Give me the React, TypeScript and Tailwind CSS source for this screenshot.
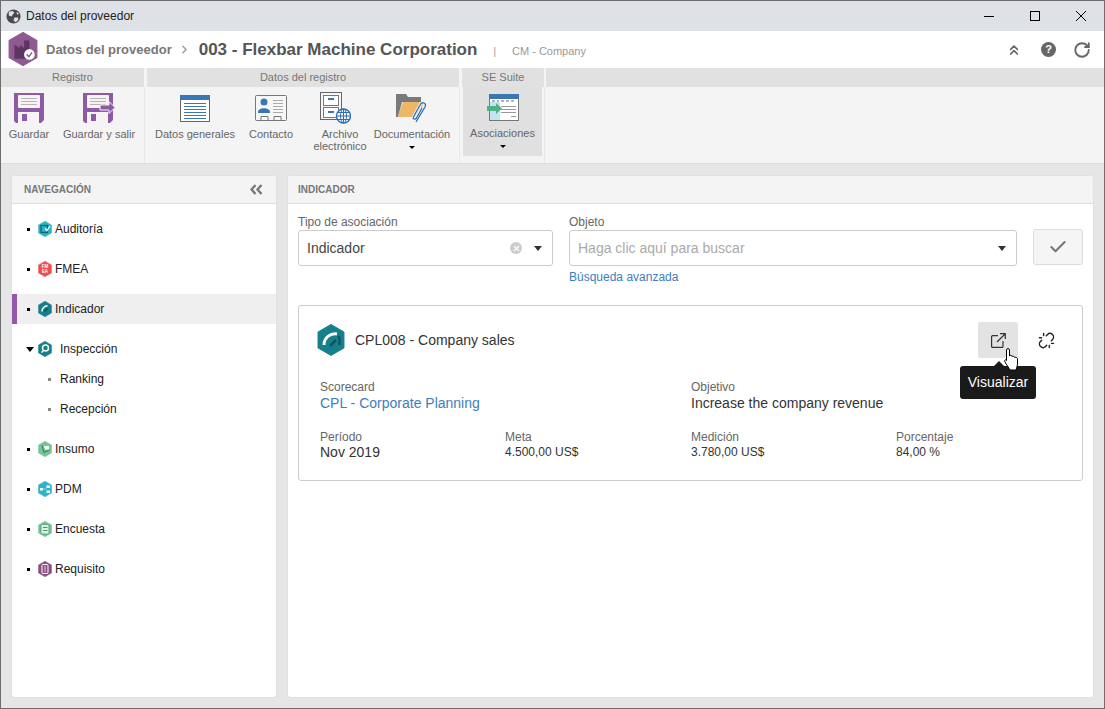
import React from "react";
import { Check, ChevronRight, ChevronsUp, Unlink, X, RotateCw } from "lucide-react";

const font = "font-['Liberation_Sans',Arial,sans-serif]";

function Hex({ size, color, children }: { size: number; color: string; children?: React.ReactNode }) {
  return (
    <svg width={size} height={size * 1.14} viewBox="0 0 28 32" className="shrink-0">
      <path d="M14 0.5 L27 8 V24 L14 31.5 L1 24 V8 Z" fill={color} stroke={color} strokeLinejoin="round" />
      {children}
    </svg>
  );
}

function Floppy({ arrow }: { arrow?: boolean }) {
  return (
    <svg width={arrow ? 32 : 30} height="30" viewBox={arrow ? "0 0 32 30" : "0 0 30 30"}>
      <path d="M0 0 H30 V27 L27 30 H2 L0 28 Z" fill="#8e5aa6" />
      <rect x="4" y="2" width="22" height="13" rx="1" fill="#f4f4f4" />
      <path d="M7 5.500 H23 M7 8.500 H23 M7 11.500 H23" stroke="#b5b5b5" strokeWidth="1" />
      <rect x="4" y="19" width="21" height="11" fill="#f4f4f4" />
      <rect x="8" y="21" width="5" height="7" fill="#8e5aa6" />
      {arrow && <path d="M17 12 H26 V8.500 L32 14.500 L26 20.500 V17 H17 Z" fill="#8e5aa6" stroke="#f4f4f4" strokeWidth="1" />}
    </svg>
  );
}

function DocIcon() {
  return (
    <svg width="30" height="27" viewBox="0 0 30 27">
      <rect x="0.500" y="0.500" width="29" height="26" fill="#fff" stroke="#666" />
      <rect x="0" y="0" width="30" height="5" fill="#3a75b5" />
      <path d="M4 8.500 H26 M4 11.500 H26 M4 14.500 H26 M4 17.500 H26 M4 20.500 H26 M4 23.500 H26" stroke="#3a75b5" strokeWidth="1" />
    </svg>
  );
}

function ContactIcon() {
  return (
    <svg width="32" height="26" viewBox="0 0 32 26">
      <rect x="0.500" y="0.500" width="31" height="25" rx="1" fill="#f7f7f7" stroke="#777" />
      <circle cx="9" cy="7" r="3.500" fill="#3a75b5" />
      <path d="M3 17 C3 12 15 12 15 17 V18 H3 Z" fill="#3a75b5" />
      <path d="M18 5.500 H28 M18 8.500 H28 M18 11.500 H28 M18 14.500 H28 M18 17.500 H28" stroke="#aaa" />
      <path d="M6 25 V21.500 H13 V25 M19 25 V21.500 H26 V25" fill="#f7f7f7" stroke="#777" />
    </svg>
  );
}

function ArchiveIcon() {
  return (
    <svg width="31" height="32" viewBox="0 0 31 32">
      <rect x="0.500" y="0.500" width="21" height="27" fill="#f7f7f7" stroke="#666" />
      <rect x="3.500" y="3.500" width="15" height="10" fill="#fff" stroke="#777" />
      <rect x="3.500" y="15.500" width="15" height="10" fill="#fff" stroke="#777" />
      <path d="M8 7 H14 M8 20 H14" stroke="#3a75b5" strokeWidth="2" />
      <circle cx="23.500" cy="24" r="7" fill="#fff" stroke="#2d6fb3" strokeWidth="1.400" />
      <path d="M16.500 24 H30.500 M23.500 17 V31 M18 20.500 H29 M18 27.500 H29" stroke="#2d6fb3" />
      <ellipse cx="23.500" cy="24" rx="3" ry="7" fill="none" stroke="#2d6fb3" />
    </svg>
  );
}

function FolderIcon() {
  return (
    <svg width="32" height="30" viewBox="0 0 32 30">
      <path d="M0 1 H10 L12 4 H25 V9 H6 L2 24 H0 Z" fill="#7a7a7a" />
      <path d="M7 9 H28 L23 24 H1.500 Z" fill="#ecb866" />
      <path d="M20 29 L29 14 C31 10 26 8 24 12 L17.500 24 C16.500 26 19 27 20.500 25 L26 15" fill="none" stroke="#f4f4f4" strokeWidth="3" />
      <path d="M20 29 L29 14 C31 10 26 8 24 12 L17.500 24 C16.500 26 19 27 20.500 25 L26 15" fill="none" stroke="#2d6fb3" strokeWidth="1.300" />
    </svg>
  );
}

function AssocIcon() {
  return (
    <svg width="32" height="27" viewBox="0 0 32 27">
      <rect x="2.500" y="0.500" width="29" height="26" fill="#fff" stroke="#777" />
      <rect x="2" y="0" width="30" height="5" fill="#3a75b5" />
      <rect x="3" y="8" width="10" height="18" fill="#c6e3f5" />
      <path d="M5 7 H8 M10 7 H12 M14 7 H17 M19 7 H22 M24 7 H27" stroke="#666" />
      <path d="M14 12.500 H29 M14 15.500 H29 M14 18.500 H29 M24 22.500 H29" stroke="#999" />
      <path d="M0 12 H9 V9 L15 14.500 L9 20 V17 H0 Z" fill="#4fb286" />
    </svg>
  );
}

function ToolBtn({ icon, label, arrow, active, width }: { icon: React.ReactNode; label: React.ReactNode; arrow?: boolean; active?: boolean; width: string }) {
  return (
    <div className={`flex flex-col items-center ${width} h-[69px] ${active ? "bg-[#e0e0e0]" : ""}`}>
      <div className="h-[30px] mt-[5px] flex items-center justify-center shrink-0">{icon}</div>
      <div className="mt-[5px] text-[11px] leading-[12px] text-[#666] text-center whitespace-nowrap">{label}</div>
      {arrow && <div className="mt-[6px] w-0 h-0 border-x-[3px] border-x-transparent border-t-[3px] border-t-black" />}
    </div>
  );
}

function NavRow({ icon, label, active }: { icon: React.ReactNode; label: string; active?: boolean }) {
  return (
    <div className={`h-[30px] flex items-center text-[12px] text-[#222] ${active ? "bg-[#efefef] border-l-[5px] border-l-[#9558a8] pl-[10px]" : "pl-[15px]"}`}>
      <span className="w-[3px] h-[3px] bg-black mr-[8px]" />
      {icon}
      <span className="ml-[3px]">{label}</span>
    </div>
  );
}

function Field({ label, value, valueClass }: { label: string; value: string; valueClass: string }) {
  return (
    <div>
      <div className="text-[12px] leading-[14px] text-[#666]">{label}</div>
      <div className={valueClass}>{value}</div>
    </div>
  );
}

const caret = "w-0 h-0 border-x-[4px] border-x-transparent border-t-[5px] border-t-[#333]";

export default function App() {
  return (
    <div className={`${font} w-[1105px] h-[709px] overflow-hidden flex flex-col bg-[#e6e6e6] border-x border-t border-[#6e6e6e]`}>
      {/* Title bar */}
      <div className="h-[30px] shrink-0 bg-[#dee1e6] flex items-center pl-[5px] text-[12px] text-[#222]">
        <svg width="15" height="15" viewBox="0 0 16 16" className="mr-[5px]">
          <circle cx="8" cy="8" r="7.500" fill="#4a4a4a" />
          <path d="M3 3 L7 2 L9 4 L7 6 L6 8 L3 7 Z M9 9 L13 9 L13 12 L10 14 L8 12 Z M11 3 L14 5 L12 6 Z" fill="#dee1e6" />
        </svg>
        <span>Datos del proveedor</span>
        <div className="ml-auto flex items-center pr-[18px] gap-[36px]">
          <div className="w-[10px] h-px bg-black" />
          <div className="w-[10px] h-[10px] border border-black" />
          <svg width="10" height="10" viewBox="0 0 10 10">
            <path d="M0 0 L10 10 M10 0 L0 10" stroke="#000" strokeWidth="1" />
          </svg>
        </div>
      </div>

      {/* Record header */}
      <div className="h-[37px] shrink-0 bg-white flex items-center pl-[7px]">
        <Hex size={30} color="#8e5a90">
          <path d="M6 25 V12 L11 15 V12 L15 15 V8 H20 V25 Z" fill="#5d3560" />
          <circle cx="20" cy="21" r="5" fill="#fff" />
          <path d="M17.500 21 L19.500 23 L22.500 19" stroke="#8e5a90" strokeWidth="1.300" fill="none" />
        </Hex>
        <span className="ml-[8px] text-[13px] font-bold text-[#777]">Datos del proveedor</span>
        <ChevronRight size={13} strokeWidth={2.500} className="text-[#999] ml-[6px] mr-[8px]" />
        <span className="text-[17px] font-bold text-[#555]">003 - Flexbar Machine Corporation</span>
        <span className="ml-[16px] pt-[3px] text-[10px] text-[#999]">|</span>
        <span className="ml-[16px] pt-[3px] text-[11px] text-[#999]">CM - Company</span>
        <div className="ml-auto flex items-center text-[#666] pr-[13px]">
          <ChevronsUp size={16} strokeWidth={2.500} className="mr-[19px]" />
          <div className="w-[15px] h-[15px] rounded-full bg-[#666] text-white text-[11px] font-bold flex items-center justify-center mr-[17px]">?</div>
          <RotateCw size={18} strokeWidth={2.500} />
        </div>
      </div>

      {/* Toolbar */}
      <div className="h-[96px] shrink-0 flex bg-[#f4f4f4] border-b border-[#dcdcdc]">
        <div className="w-[146px] shrink-0">
          <div className="w-[143px] h-[19px] bg-[#e1e1e1] text-[11px] leading-[19px] text-[#777] text-center">Registro</div>
          <div className="w-[144px] h-[76px] flex pl-[4px] pt-[1px] border-r border-[#e8e8e8]">
            <ToolBtn icon={<Floppy />} label="Guardar" width="w-[48px]" />
            <div className="w-[4px]" />
            <ToolBtn icon={<Floppy arrow />} label="Guardar y salir" width="w-[84px]" />
          </div>
        </div>
        <div className="w-[315px] shrink-0">
          <div className="w-[312px] h-[19px] bg-[#e1e1e1] text-[11px] leading-[19px] text-[#777] text-center">Datos del registro</div>
          <div className="w-[313px] h-[76px] flex pl-[4px] pt-[1px] border-r border-[#e8e8e8]">
            <ToolBtn icon={<DocIcon />} label="Datos generales" width="w-[88px]" />
            <ToolBtn icon={<ContactIcon />} label="Contacto" width="w-[64px]" />
            <ToolBtn icon={<div className="mr-[10px]"><ArchiveIcon /></div>} label={<>Archivo<br />electrónico</>} width="w-[74px]" />
            <ToolBtn icon={<FolderIcon />} label="Documentación" arrow width="w-[70px]" />
          </div>
        </div>
        <div className="w-[84px] shrink-0">
          <div className="w-[82px] h-[19px] bg-[#e1e1e1] text-[11px] leading-[19px] text-[#777] text-center">SE Suite</div>
          <div className="w-[83px] h-[76px] pl-[1px] border-r border-[#e8e8e8]">
            <ToolBtn icon={<AssocIcon />} label="Asociaciones" arrow active width="w-[79px]" />
          </div>
        </div>
        <div className="flex-1">
          <div className="h-[19px] bg-[#e1e1e1]" />
        </div>
      </div>

      {/* Body */}
      <div className="flex-1 flex gap-[12px] pt-[12px] pl-[11px] pr-[11px] pb-[11px] min-h-0 border-b border-[#6e6e6e]">
        {/* Navigation panel */}
        <div className="w-[264px] bg-white rounded-[2px] shadow-[0_0_1px_#bbb] shrink-0">
          <div className="h-[28px] bg-[#f4f4f4] border-b border-[#ddd] flex items-center justify-between pl-[12px] pr-[13px] rounded-t-[2px]">
            <span className="text-[10px] font-bold text-[#777]">NAVEGACIÓN</span>
            <svg width="13" height="11" viewBox="0 0 13 11">
              <path d="M5.500 1 L1.500 5.500 L5.500 10 M11.500 1 L7.500 5.500 L11.500 10" fill="none" stroke="#777" strokeWidth="2.400" />
            </svg>
          </div>
          <div className="pt-[10px] flex flex-col gap-[10px]">
            <NavRow label="Auditoría" icon={<Hex size={14} color="#2bb3c9"><rect x="6" y="9" width="13" height="14" fill="none" stroke="#16606e" strokeWidth="2.500" /><path d="M14 15 L18 19 L24 10" stroke="#fff" strokeWidth="2.500" fill="none" /></Hex>} />
            <NavRow label="FMEA" icon={<Hex size={14} color="#e9524f"><text x="14" y="14" textAnchor="middle" fontSize="9" fontWeight="700" fill="#fff">FM</text><text x="14" y="24" textAnchor="middle" fontSize="9" fontWeight="700" fill="#fff">EA</text></Hex>} />
            <NavRow label="Indicador" active icon={<Hex size={14} color="#15808c"><path d="M8 21 C8 13 15 9 19 10" stroke="#fff" strokeWidth="3" fill="none" /><path d="M13 21 L19 15" stroke="#0b4f57" strokeWidth="2.500" /></Hex>} />
            <div>
              <div className="h-[30px] flex items-center text-[12px] text-[#222] pl-[14px]">
                <span className="w-0 h-0 border-x-[4px] border-x-transparent border-t-[5px] border-t-black mr-[4px]" />
                <Hex size={14} color="#15808c"><circle cx="15" cy="14" r="6" fill="none" stroke="#fff" strokeWidth="3" /><path d="M11 19 L7 23" stroke="#fff" strokeWidth="3" /></Hex>
                <span className="ml-[8px]">Inspección</span>
              </div>
              {["Ranking", "Recepción"].map((s) => (
                <div key={s} className="h-[30px] flex items-center text-[12px] text-[#222] pl-[36px]">
                  <span className="w-[3px] h-[3px] bg-[#888] mr-[9px]" />
                  {s}
                </div>
              ))}
            </div>
            <NavRow label="Insumo" icon={<Hex size={14} color="#75c596"><path d="M8 9 L12 23 L23 18" stroke="#2a7a4c" strokeWidth="2" fill="none" /><path d="M12 10 H22 V17 H14 Z" fill="#fff" /></Hex>} />
            <NavRow label="PDM" icon={<Hex size={14} color="#2bb3c9"><rect x="4" y="14" width="6" height="5" fill="#fff" /><rect x="17" y="9" width="7" height="5" fill="#fff" /><rect x="17" y="19" width="7" height="5" fill="#fff" /><path d="M10 16 H17" stroke="#fff" /></Hex>} />
            <NavRow label="Encuesta" icon={<Hex size={14} color="#75c596"><rect x="6" y="7" width="16" height="19" rx="2" fill="#dff3e7" stroke="#3f9a68" strokeWidth="1.500" /><path d="M10 13 H19 M10 19 H19" stroke="#3f9a68" strokeWidth="2" /></Hex>} />
            <NavRow label="Requisito" icon={<Hex size={14} color="#8b4f80"><rect x="8" y="7" width="12" height="18" rx="2" fill="none" stroke="#fff" strokeWidth="2" /><path d="M12 12 H16 M12 16 H16 M12 20 H16" stroke="#fff" strokeWidth="1.500" /></Hex>} />
          </div>
        </div>

        {/* Main panel */}
        <div className="flex-1 bg-white rounded-[2px] shadow-[0_0_1px_#bbb]">
          <div className="h-[28px] bg-[#f4f4f4] border-b border-[#ddd] flex items-center pl-[10px] rounded-t-[2px]">
            <span className="text-[10px] font-bold text-[#777]">INDICADOR</span>
          </div>
          <div className="pt-[11px] px-[10px]">
            <div className="flex gap-[16px]">
              <div className="w-[255px] shrink-0">
                <div className="text-[12px] leading-[14px] text-[#666] mb-[1px]">Tipo de asociación</div>
                <div className="h-[36px] border border-[#ccc] rounded-[3px] flex items-center pl-[8px] pr-[10px] text-[14px] text-[#444]">
                  <span>Indicador</span>
                  <span className="ml-auto w-[12px] h-[12px] rounded-full bg-[#ccc] flex items-center justify-center mr-[12px]">
                    <X size={9} strokeWidth={3} className="text-white" />
                  </span>
                  <span className={caret} />
                </div>
              </div>
              <div className="w-[448px] shrink-0">
                <div className="text-[12px] leading-[14px] text-[#666] mb-[1px]">Objeto</div>
                <div className="h-[36px] border border-[#ccc] rounded-[3px] flex items-center pl-[8px] pr-[10px] text-[14px] text-[#aaa]">
                  <span>Haga clic aquí para buscar</span>
                  <span className={`ml-auto ${caret}`} />
                </div>
                <div className="mt-[4px] text-[12px] leading-[14px] text-[#3d7ebf]">Búsqueda avanzada</div>
              </div>
              <div className="w-[50px] h-[36px] mt-[14px] shrink-0 bg-[#f5f5f5] border border-[#ddd] rounded-[3px] flex items-center justify-center">
                <Check size={20} strokeWidth={2.500} className="text-[#777]" />
              </div>
            </div>

            {/* Indicator card */}
            <div className="mt-[21px] h-[176px] border border-[#ccc] rounded-[3px] pt-[16px] pl-[18px] pr-[8px] relative">
              <div className="flex items-center h-[36px]">
                <Hex size={28} color="#15808c">
                  <path d="M7 21 C7 13 14 9 20 10" stroke="#fff" strokeWidth="3" fill="none" />
                  <path d="M13 22 L19 16" stroke="#0b4f57" strokeWidth="2.500" />
                  <path d="M21 12 C23 14 23 18 22 21" stroke="#0b4f57" strokeWidth="2" fill="none" />
                </Hex>
                <span className="ml-[10px] text-[14px] text-[#333]">CPL008 - Company sales</span>
                <div className="ml-auto w-[40px] h-[36px] bg-[#e3e3e3] rounded-[2px] flex items-center justify-center">
                  <svg width="15" height="15" viewBox="0 0 15 15" fill="none" stroke="#333" strokeWidth="1.200">
                    <path d="M7 2.600 H1.600 A1 1 0 0 0 0.600 3.600 V13.400 A1 1 0 0 0 1.600 14.400 H11 A1 1 0 0 0 12 13.400 V8" />
                    <path d="M6 9 L14 1 M9 0.700 H14.300 V6" />
                  </svg>
                </div>
                <div className="w-[56px] flex justify-center">
                  <Unlink size={17} strokeWidth={2} className="text-[#222]" />
                </div>
              </div>
              <div className="pl-[3px] mt-[22px] grid grid-cols-[371px_1fr] h-[36px]">
                <Field label="Scorecard" value="CPL - Corporate Planning" valueClass="text-[14px] leading-[18px] text-[#3d7ebf]" />
                <Field label="Objetivo" value="Increase the company revenue" valueClass="text-[14px] leading-[18px] text-[#333]" />
              </div>
              <div className="pl-[3px] mt-[14px] grid grid-cols-[185px_186px_205px_1fr]">
                <Field label="Período" value="Nov 2019" valueClass="text-[14px] leading-[16px] text-[#333]" />
                <Field label="Meta" value="4.500,00 US$" valueClass="text-[12px] leading-[16px] text-[#333]" />
                <Field label="Medición" value="3.780,00 US$" valueClass="text-[12px] leading-[16px] text-[#333]" />
                <Field label="Porcentaje" value="84,00 %" valueClass="text-[12px] leading-[16px] text-[#333]" />
              </div>

              {/* Tooltip and pointer over the card */}
              <div className="absolute left-[661px] top-[60px] w-[76px] h-[33px] bg-[#1a1a1a] rounded-[3px] text-white text-[14px] flex items-center justify-center">
                <span className="absolute -top-[5px] left-[34px] w-0 h-0 border-x-[5px] border-x-transparent border-b-[5px] border-b-[#1a1a1a]" />
                Visualizar
              </div>
              <svg width="15" height="23" viewBox="0 0 15 23" className="absolute left-[705px] top-[42px]">
                <path d="M2.500 2 C2.500 0.200 5.500 0.200 5.500 2 V8 C5.500 7 8 7 8 8.500 C8 8 10.500 8 10.500 9.500 C10.500 9 13.500 9 13.500 11 V16 C13.500 18 12.500 20 12 22 H6 C5 20 2 16 1 14 C0 12 1.500 11 2.500 12.500 Z" fill="#fff" stroke="#000" strokeWidth="1" strokeLinejoin="round" />
              </svg>
            </div>
          </div>
        </div>
      </div>
    </div>
  );
}
